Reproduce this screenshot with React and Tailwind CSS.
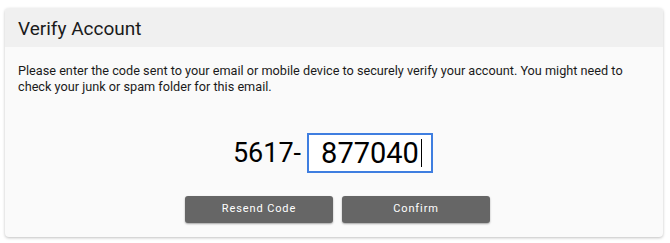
import React from 'react'

const App = () => {
  return (
    <div className="min-h-screen bg-white pt-[8px] pl-[5px] pr-[7px] font-['Roboto',sans-serif]">
      <div className="bg-[#fafafa] rounded-[4px] shadow-[0_1px_3px_rgba(0,0,0,0.25)] overflow-hidden">
        {/* Header */}
        <div className="h-[39px] bg-[#f0f0f0] flex items-center pl-[13px] pt-[1px]">
          <h1 className="text-[19px] text-[#1a1a1a] leading-none">Verify Account</h1>
        </div>

        {/* Body */}
        <div className="px-[13px] pt-[16px] pb-[14px]">
          <p className="text-[12.7px] leading-[16px] text-[#1a1a1a]">
            Please enter the code sent to your email or mobile device to securely verify your account. You might need to
            <br />
            check your junk or spam folder for this email.
          </p>

          <div className="flex items-center justify-center mt-[38px] ml-[-2px]">
            <span className="text-[27px] text-black leading-none mr-[6px]">5617-</span>
            <div className="w-[126px] h-[40px] border-2 border-[#3f7ee0] bg-white flex items-center pl-[12px]">
              <span className="text-[29px] text-black leading-none">877040</span>
              <span className="w-px h-[28px] bg-black ml-[2px]"></span>
            </div>
          </div>

          <div className="flex justify-center gap-[9px] mt-[23px] ml-[7px]">
            <button className="w-[148px] h-[27px] rounded-[3px] bg-[#666666] text-white text-[11px] tracking-[0.08em] shadow-[0_1px_2px_rgba(0,0,0,0.35)]">
              Resend Code
            </button>
            <button className="w-[148px] h-[27px] rounded-[3px] bg-[#666666] text-white text-[11px] tracking-[0.08em] shadow-[0_1px_2px_rgba(0,0,0,0.35)]">
              Confirm
            </button>
          </div>
        </div>
      </div>
    </div>
  )
}

export default App
